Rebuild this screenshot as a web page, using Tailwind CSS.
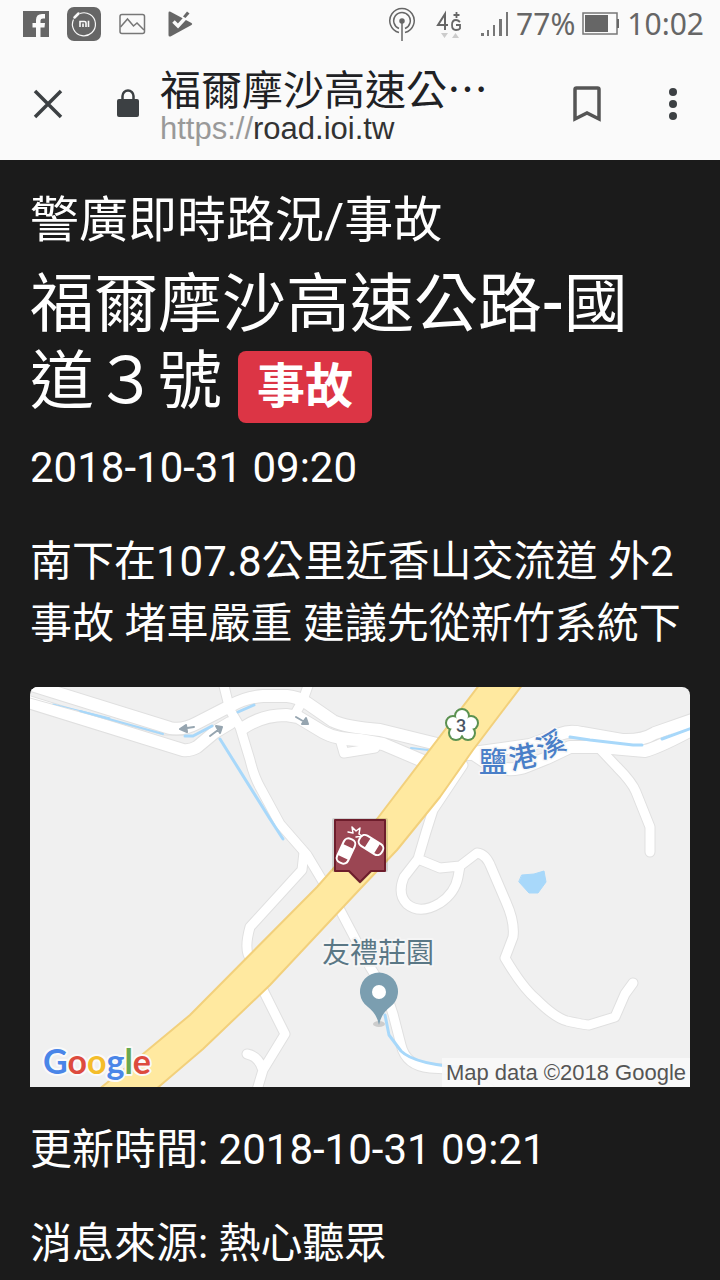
<!DOCTYPE html>
<html lang="zh-Hant">
<head>
  <meta charset="UTF-8" />
  <meta name="viewport" content="width=device-width, initial-scale=1.0" />
  <title>福爾摩沙高速公路-國道３號 事故</title>
  <script src="https://cdn.jsdelivr.net/npm/@tailwindcss/browser@4"></script>
</head>
<body class="bg-[#1b1b1b] min-h-screen text-white font-[Roboto,'Noto_Sans_CJK_TC',sans-serif]">
  <header class="bg-[#fafafa]">
    <!-- Status bar -->
    <div class="flex h-12 items-center justify-between pl-[22px] pr-4 text-[#666] text-[30px] leading-none font-['Noto_Sans',sans-serif]">
      <div class="flex items-center gap-[17px]">
        <svg class="w-7 h-7" viewBox="0 0 28 28"><path fill="#666" d="M1 1h26v26H1z"/><path fill="#fafafa" d="M14 27V17.500h-3.500V13H14v-3q0-6 6-6h3v4.500h-2q-2.500 0-2.500 2V13H23l-.5 4.500h-4V27z"/></svg>
        <svg class="w-[34px] h-[34px]" viewBox="0 0 34 34" fill="none">
          <rect width="34" height="34" rx="7" fill="#666"/>
          <path d="M13 6.500a11.500 11.500 0 1 1-6.500 6" stroke="#fafafa" stroke-width="1.200"/>
          <path d="M7.500 10.500l4-4" stroke="#fafafa" stroke-width="2.500" stroke-linecap="round"/>
          <path d="M13 20v-5.500h4.500q1.500 0 1.500 1.500v4M16 16.500V20M21.500 13.800V20" stroke="#fafafa" stroke-width="1.600"/>
        </svg>
        <svg class="w-7 h-7" viewBox="0 0 28 28" fill="none" stroke="#777" stroke-width="1.500"><rect x="2" y="4.500" width="24.500" height="19" rx="2"/><path d="M2.500 17l7-8 6 7 3.500-3 7 7"/></svg>
        <svg class="w-[34px] h-[34px]" viewBox="0 0 34 34"><path fill="#666" d="M5.500 6q0-2 2-1.200L28.500 16q1.500 1 0 2L7.500 29.500q-2 .5-2-1.500z"/><path d="M10.500 14.500l4.500 4.500L26 7" fill="none" stroke="#fafafa" stroke-width="3.500"/><path d="M20 9.500l4-5 2.500 2-4 4.500z" fill="#666"/></svg>
      </div>
      <div class="flex items-center gap-[7px]">
        <div class="mr-3 flex items-center gap-5">
          <svg class="w-7 h-9" viewBox="0 0 28 36" fill="none" stroke="#666" stroke-width="1.500">
            <path d="M11 26.500a12.200 12.200 0 1 1 6 0M11 22.500a8.300 8.300 0 1 1 6 0"/>
            <circle cx="14" cy="15" r="2" fill="#666"/><path d="M14 15v20"/>
          </svg>
          <svg class="w-[26px] h-8" viewBox="0 0 26 32" fill="none" stroke="#666" stroke-width="2">
            <path d="M9 22V6L2 17h10"/><path d="M24 14q-2-2-4-2-4 0-4 5t4 5q3 0 4-1.500V17h-4M20.500 4v6M17.500 7h6" stroke-width="1.800"/>
            <path d="M5 25h7l-3.500 5zM16 30h7l-3.500-5z" fill="#ccc" stroke="none"/>
          </svg>
        </div>
        <svg class="w-7 h-7" viewBox="0 0 28 28" fill="#777"><path d="M0 23h3v3H0zM6 20h2v6H6zM12 15h2v11h-2zM18 9h3v17h-3zM25 2h2v24h-2z"/></svg>
        <span>77%</span>
        <svg class="w-[38px] h-7" viewBox="0 0 38 28"><rect x="1" y="3" width="34" height="21" fill="none" stroke="#777" stroke-width="1.500"/><path fill="#666" d="M3 5h23v17H3zM35 9h2v9h-2z"/></svg>
        <span>10:02</span>
      </div>
    </div>
    <!-- Browser toolbar -->
    <div class="flex h-28 items-center pr-1">
      <button type="button" aria-label="關閉" class="flex h-24 w-24 items-center justify-center">
        <svg class="w-8 h-8" viewBox="0 0 32 32" fill="none" stroke="#3c4043" stroke-width="3.500"><path d="M3 3l26 26M29 3L3 29"/></svg>
      </button>
      <svg class="w-16 h-8" viewBox="0 0 64 32"><rect x="21" y="11" width="22" height="18" rx="2" fill="#3c4043"/><path d="M26.500 12V8a5.500 5.500 0 0 1 11 0v4" fill="none" stroke="#3c4043" stroke-width="2.500"/></svg>
      <div class="min-w-0 flex-1 pt-2">
        <div class="text-[41px] leading-[42px] text-[#202124] whitespace-nowrap">福爾摩沙高速公⋯</div>
        <div class="text-[31px] leading-[34px] text-[#333] font-['Liberation_Sans',sans-serif]"><span class="text-[#999]">https://</span>road.ioi.tw</div>
      </div>
      <button type="button" aria-label="加入書籤" class="flex h-24 w-[86px] items-center justify-center">
        <svg class="w-8 h-10" viewBox="0 0 32 40" fill="none" stroke="#555" stroke-width="3.500"><path d="M4 35V5.500Q4 4 5.500 4h21Q28 4 28 5.500V35l-12-6z"/></svg>
      </button>
      <button type="button" aria-label="選單" class="flex h-24 w-[86px] items-center justify-center">
        <svg class="w-2.5 h-8" viewBox="0 0 10 32" fill="#3c4043"><circle cx="5" cy="4" r="4"/><circle cx="5" cy="16" r="4"/><circle cx="5" cy="28" r="4"/></svg>
      </button>
    </div>
  </header>

  <main class="px-[30px] pt-8 text-[42px] leading-[62px]">
    <h2 class="mb-4 text-[49px] leading-[58px]">警廣即時路況/事故</h2>
    <h1 class="mb-3.5 text-[64px] leading-[77px]">福爾摩沙高速公路<span class="font-medium">-</span>國道３號 <span class="inline-block rounded-lg bg-[#dc3545] px-[19px] py-3 text-5xl leading-none font-bold">事故</span></h1>
    <p class="mb-8">2018-10-31 09:20</p>
    <p>南下在107.8公里近香山交流道 外2 事故 堵車嚴重 建議先從新竹系統下</p>

    <figure class="relative my-8 overflow-hidden rounded-t-lg bg-[#f0f0f0]">
      <svg class="block w-full" viewBox="0 0 660 400" fill="none" stroke-linejoin="round" stroke-linecap="round">
        <defs>
          <g id="main-roads">
            <path d="M-10-6L5-1 140 41Q152 44 167 36L200 19Q216 10 233 9H257Q268 10 277 16L303 34Q315 40 350 43L407 57 440 67"/>
            <path d="M-5 14L153 63Q160 64 167 60L185 45 200 36M213 41Q232 28 256 28L268 30 293 45Q305 52 330 53L353 57 400 77"/>
            <path d="M436 62L460 78Q480 86 497 79L517 71 540 60 570 60 615 64Q630 60 665 41"/>
            <path d="M436 67L500 58 530 47Q540 43 552 46L592 53Q612 54 625 46L665 32"/>
          </g>
          <g id="side-roads">
            <path d="M193-5L200 23 210 40 220 73Q224 90 231 102L250 137 277 168 310 223 340 280Q357 305 363 327L371 358Q376 379 400 381L417 382 460 402"/>
            <path d="M274 165L272 183 220 240Q215 258 218 267L233 303 255 347 233 383 227 403M217 367Q228 369 232 381"/>
            <path d="M279-4L273 13 265 27M310 52L314 66 345 61M570 62L587 80Q602 95 606 105L620 140V165"/>
            <path d="M433 78L403 123 396 145 388 172 374 190Q367 207 377 217 390 228 410 216 425 206 428 190L430 179 447 166Q456 167 461 180L476 215Q485 235 483 250L475 271Q492 300 506 312 525 331 537 334 555 338 559 338L585 330 595 307 603 296M388 172L410 181 430 179"/>
          </g>
        </defs>
        <use href="#main-roads" stroke="#e0e0e0" stroke-width="14"/>
        <use href="#side-roads" stroke="#e0e0e0" stroke-width="11"/>
        <use href="#main-roads" stroke="#fff" stroke-width="12"/>
        <use href="#side-roads" stroke="#fff" stroke-width="9"/>
        <path d="M0 11L133 48H155" stroke="#e0e0e0" stroke-width="1"/>
        <!-- Water -->
        <g stroke="#a8d8fa">
          <path d="M23 17L80 31" stroke-width="1"/>
          <path d="M50 24L133 47M381 61L398 63" stroke-width="2"/>
          <path d="M155 49H163L182 39M208 25L224 18M540 50L560 53 603 58H612M632 52L662 41M355 328L359 348 371 364Q385 378 440 381" stroke-width="3"/>
          <path d="M190 52L240 132 253 152" stroke-width="3"/>
          <path d="M492 188L504 187 514 184 516 195 508 206H499L489 195z" fill="#a8d8fa"/>
        </g>
        <g stroke="#96a5b0" stroke-width="2">
          <path d="M164 40L150 42M156 38l-6 4 7 3z" fill="#96a5b0"/>
          <path d="M180 49L192 40M186 39l6 1-2 6z" fill="#96a5b0"/>
          <path d="M266 30L278 37M276 31l2 6-6 0z" fill="#96a5b0"/>
        </g>
        <!-- National Highway 3 -->
        <path d="M450-3L347 132 287 200 160 328 113 367 68 403H125L173 362 240 298 330 202 367 163 410 110 443 63 493-3z" fill="#ffe9a0" stroke="#f2d07c" stroke-width="2"/>
        <g fill="#fff" stroke="#5b9150" stroke-width="4">
          <circle cx="432" cy="29" r="6"/><circle cx="441" cy="36" r="6"/><circle cx="438" cy="46" r="6"/><circle cx="426" cy="46" r="6"/><circle cx="423" cy="36" r="6"/>
        </g>
        <g fill="#fff">
          <circle cx="432" cy="29" r="6"/><circle cx="441" cy="36" r="6"/><circle cx="438" cy="46" r="6"/><circle cx="426" cy="46" r="6"/><circle cx="423" cy="36" r="6"/><circle cx="432" cy="39" r="9"/>
        </g>
        <text x="431" y="45" text-anchor="middle" class="text-[18px] font-medium" fill="#4b5563">3</text>
        <g class="text-[28px] font-medium" fill="#4a7fc8" stroke="#f7f7f7" stroke-width="3" paint-order="stroke" text-anchor="middle">
          <text transform="translate(463 85)">鹽</text>
          <text transform="translate(495 80) rotate(-12)">港</text>
          <text transform="translate(525 67) rotate(-25)">溪</text>
        </g>
        <text x="348" y="276" text-anchor="middle" class="text-[28px]" fill="#5a7785" stroke="#f5f5f5" stroke-width="4" paint-order="stroke">友禮莊園</text>
        <!-- Place pin -->
        <ellipse cx="349" cy="337" rx="6" ry="3" fill="#ccc"/>
        <path d="M349 338Q347 327 338 320A19 19 0 1 1 360 320Q351 327 349 338z" fill="#7b9eb0"/>
        <circle cx="349" cy="305" r="7" fill="#fff"/>
        <!-- Accident marker -->
        <path d="M305 131h51q2 0 2 2v50q0 2-2 2H342L330 197 318 185H304q-2 0-2-2V133q0-2 2-2z" fill="#0002"/>
        <path d="M305 133h50v51H341L330 195 319 184H305z" fill="#9b4653" stroke="#6d1d2b" stroke-width="2"/>
        <g stroke="#fff" stroke-width="2">
          <g transform="translate(316 164) rotate(25)"><rect x="-6" y="-13" width="12" height="26" rx="5"/><rect x="-5" y="-4" width="10" height="10" fill="#fff"/></g>
          <g transform="translate(341 158) rotate(-58)"><rect x="-6" y="-13" width="12" height="26" rx="5"/><rect x="-5" y="-3" width="10" height="9" fill="#fff"/></g>
          <path d="M318 145l5 1-1-6 4 4 4-3-1 6 3 2-6 1" stroke-width="1.500"/>
        </g>
        <text x="13" y="387" class="text-[34px] font-bold font-[Lato,sans-serif]" stroke="#fafafa" stroke-width="4" paint-order="stroke"><tspan fill="#4a86e8">G</tspan><tspan fill="#dd4b3e">o</tspan><tspan fill="#f4bd2a">o</tspan><tspan fill="#4a86e8">g</tspan><tspan fill="#6aa84f">l</tspan><tspan fill="#dd4b3e">e</tspan></text>
      </svg>
      <figcaption class="absolute right-0 bottom-0 bg-[#f8f8f8]/90 px-1 text-[22px] leading-[29px] text-[#555] font-['Liberation_Sans',sans-serif]">Map data ©2018 Google</figcaption>
    </figure>

    <p class="mb-8">更新時間: 2018-10-31 09:21</p>
    <p>消息來源: 熱心聽眾</p>
  </main>
</body>
</html>
